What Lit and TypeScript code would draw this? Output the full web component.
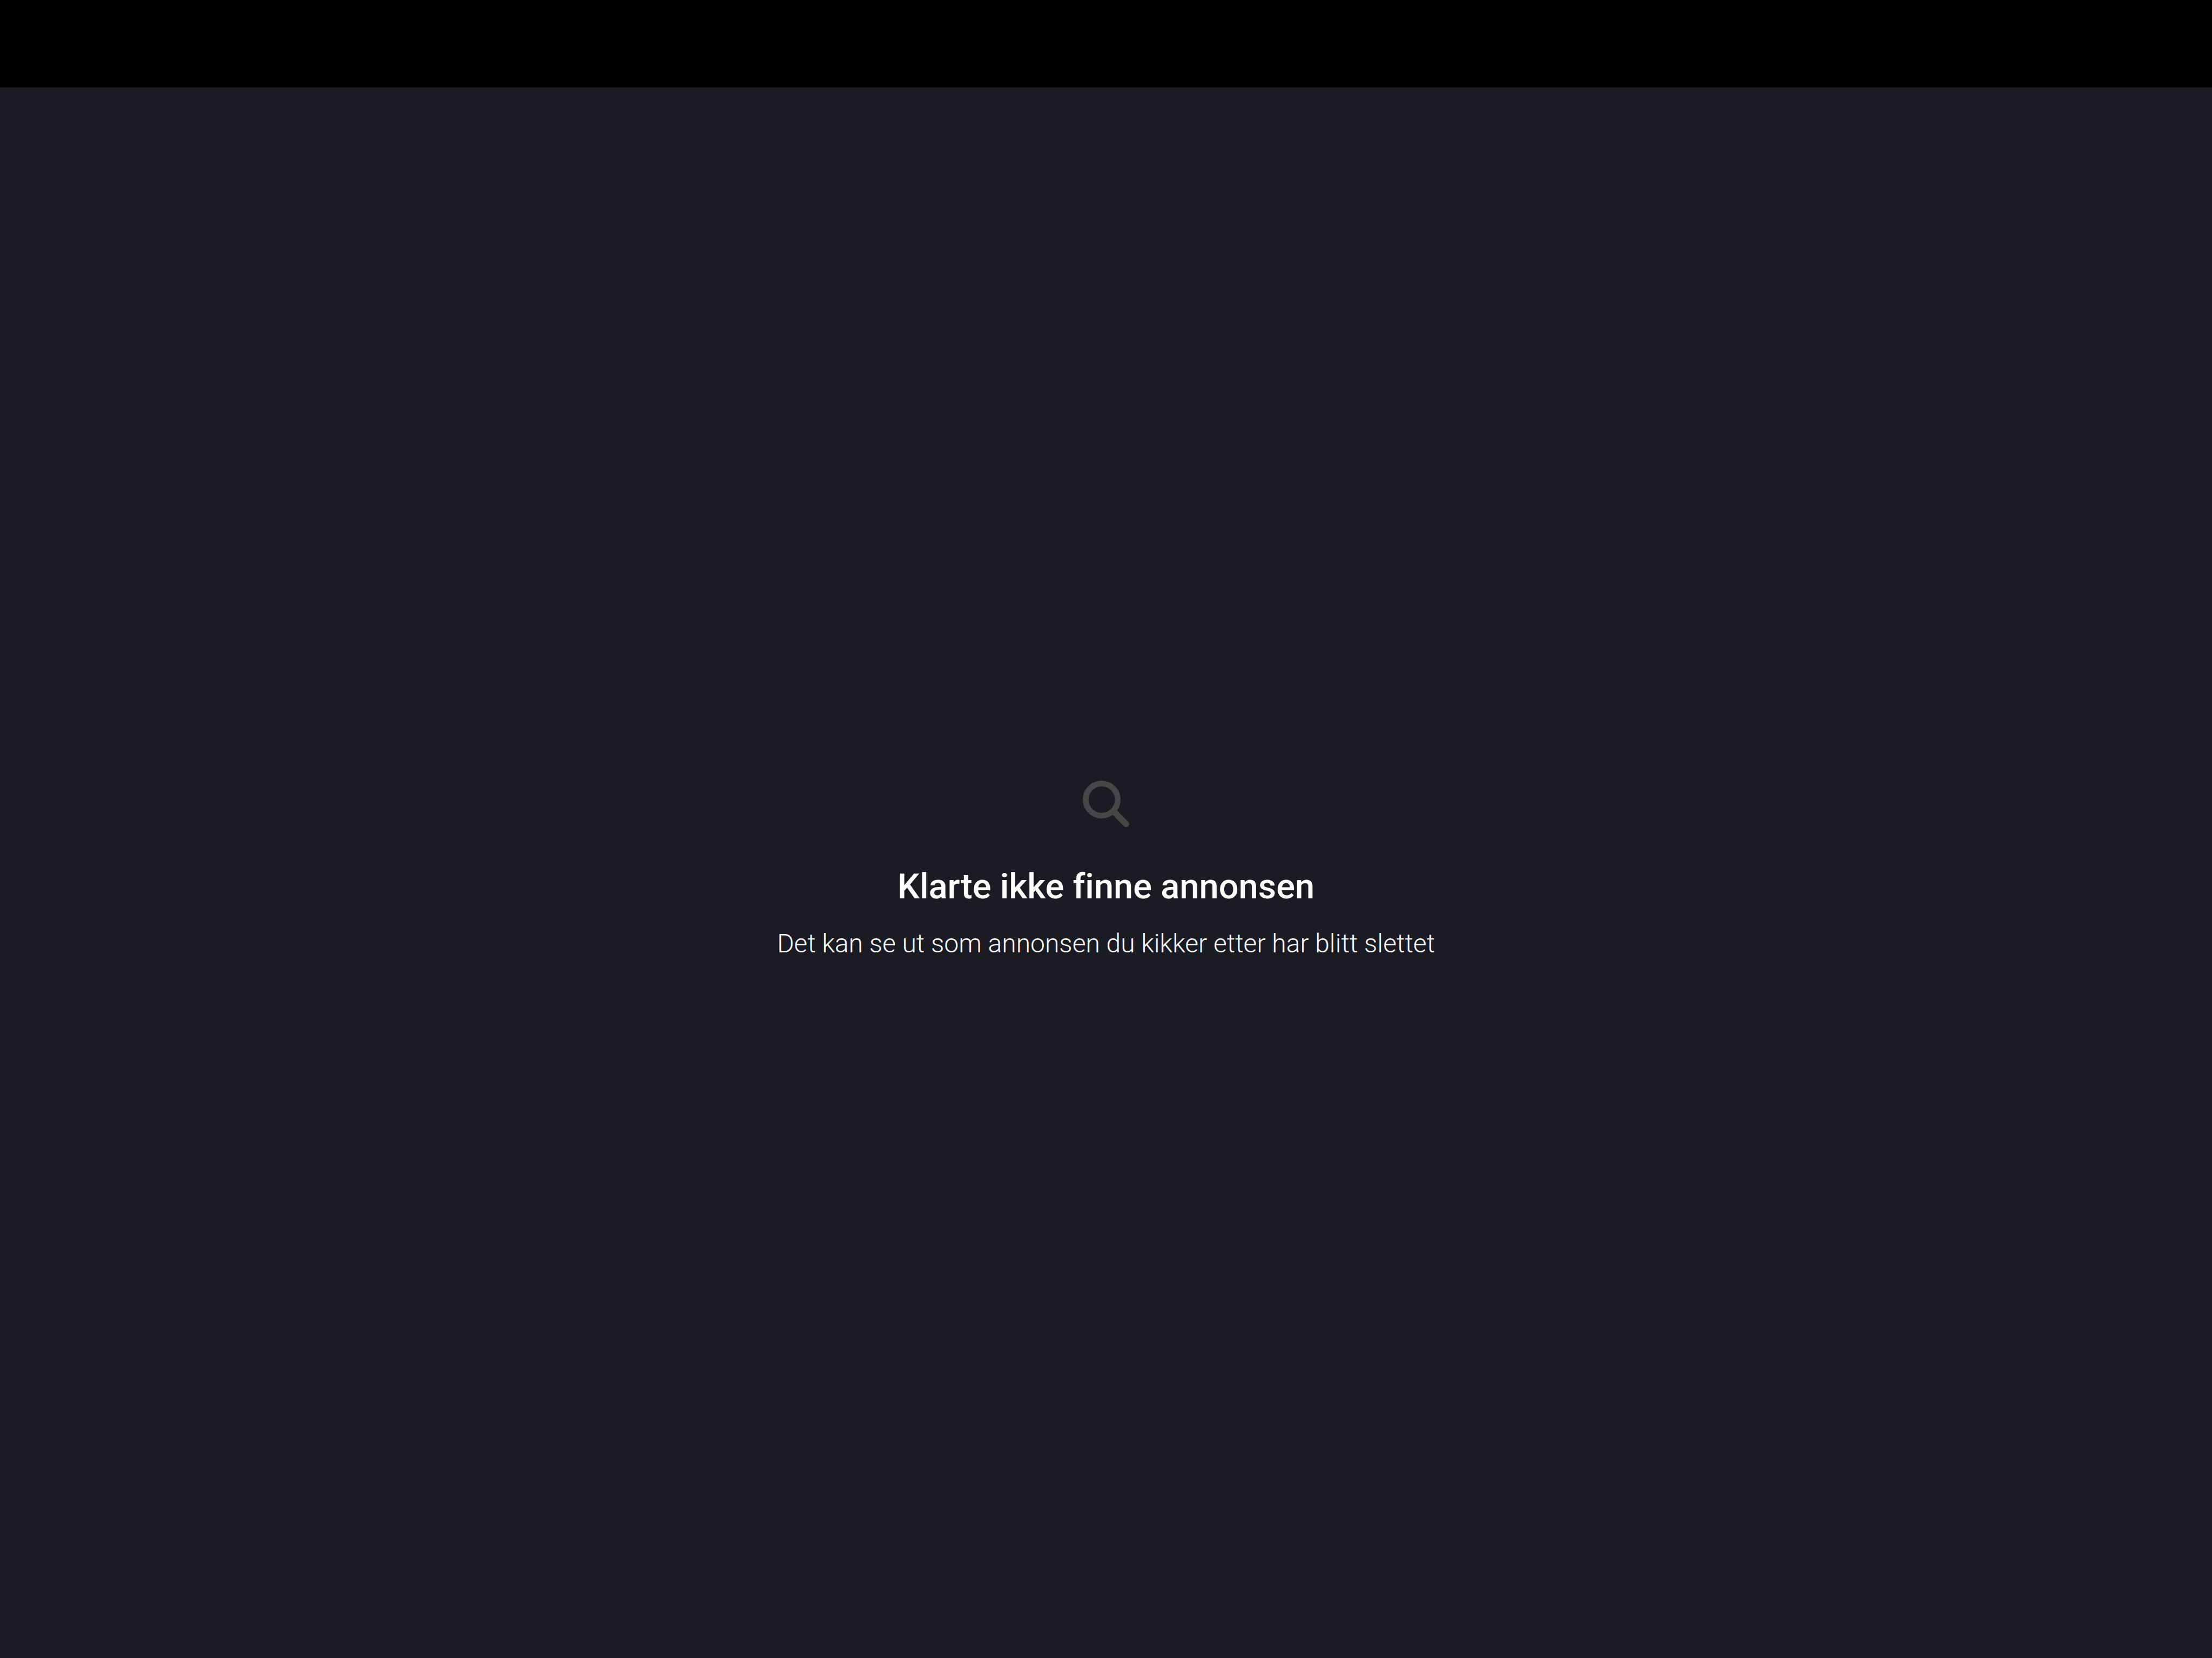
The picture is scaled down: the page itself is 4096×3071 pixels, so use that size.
import { LitElement, html, css } from "lit";
import { customElement } from "lit/decorators.js";

@customElement("search-icon")
export class SearchIcon extends LitElement {
  static styles = css`
    :host {
      display: block;
      color: #484646;
    }
    .icon {
      display: block;
      width: 86px;
      height: 86px;
    }
  `;

  render() {
    return html`
      <svg class="icon" viewBox="0 0 86 86" fill="none" stroke="currentColor" aria-hidden="true">
        <circle cx="35" cy="35" r="29.7" stroke-width="10.6" />
        <path d="M57 57 80.2 80.2" stroke-width="11.4" stroke-linecap="round" />
      </svg>
    `;
  }
}

@customElement("app-root")
export class AppRoot extends LitElement {
  static styles = css`
    :host {
      display: flex;
      flex-direction: column;
      min-height: 100vh;
      background: #1b1b24;
      color: #ffffff;
      font-family: Roboto, "Liberation Sans", sans-serif;
      font-variant-ligatures: none;
    }
    .bar {
      height: 162px;
      background: #000000;
    }
    .empty {
      flex: 1;
      display: flex;
      flex-direction: column;
      align-items: center;
      justify-content: center;
      padding-bottom: 10px;
      text-align: center;
    }
    .title {
      margin: 70px 0 36px;
      font-size: 65px;
      line-height: 80px;
      font-weight: 500;
    }
    .message {
      margin: 0;
      font-size: 48px;
      line-height: 60px;
      font-weight: 300;
    }
  `;

  render() {
    return html`
      <header class="bar"></header>
      <main class="empty">
        <search-icon></search-icon>
        <h1 class="title">Klarte ikke finne annonsen</h1>
        <p class="message">Det kan se ut som annonsen du kikker etter har blitt slettet</p>
      </main>
    `;
  }
}
